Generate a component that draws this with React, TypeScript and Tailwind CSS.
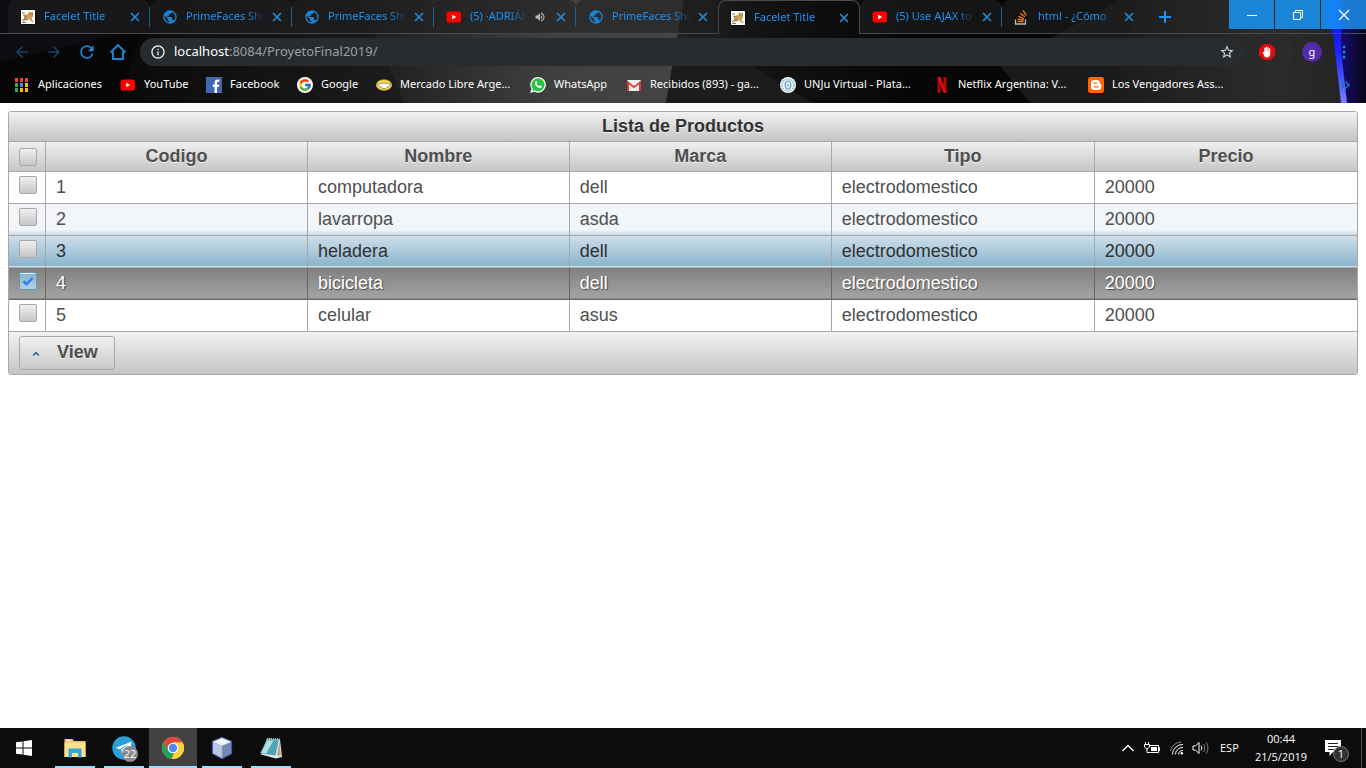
import React from "react";
import {
  MdArrowBack,
  MdArrowForward,
  MdRefresh,
  MdInfoOutline,
  MdStarBorder,
  MdVolumeUp,
  MdPublic,
} from "react-icons/md";
import { FcGoogle } from "react-icons/fc";

/* ---------- favicons ---------- */

function CatIcon() {
  return (
    <svg className="size-4" viewBox="0 0 16 16" aria-hidden="true">
      <rect x="0.5" y="0.5" width="15" height="15" fill="#000" />
      <rect x="1" y="1" width="14" height="14" fill="#fff" />
      <path d="M4 6l4-1 1-3 1.500 1.200L13 2.500v5l-1.500 2.500 2.500 3h-2L8.500 10 6 11l-3 2.500 1-4z" fill="#d1a05a" />
      <path d="M2 4h3M3 6l4 2M4 9.500l4 1.500M2 12l2-2M2 13.500h4" stroke="#7a6a4c" strokeWidth="0.900" fill="none" />
      <path d="M9.500 5h1M12 5h1" stroke="#5a3c14" strokeWidth="1" />
    </svg>
  );
}

function YouTubeIcon() {
  return (
    <svg className="size-4" viewBox="0 0 16 16" aria-hidden="true">
      <rect x="0.500" y="2.500" width="14.500" height="11" rx="2.600" fill="#f00" />
      <path d="M6.200 5.700v4.600l4-2.300z" fill="#fff" />
    </svg>
  );
}

function GlobeIcon() {
  return <MdPublic className="size-4 text-[#1b83d4]" aria-hidden="true" />;
}

function StackIcon() {
  return (
    <svg className="size-4" viewBox="0 0 16 16" aria-hidden="true" fill="none">
      <path d="M1.500 10.500v4.500h10v-4.500" stroke="#bcbbbb" strokeWidth="1.300" />
      <path d="M3.500 12.600h6M3.600 10.200l6 1M4.500 7.300l5.500 2.500M6.300 4.300l4.600 3.700M9 1.300l3.300 5" stroke="#e8741c" strokeWidth="1.400" />
    </svg>
  );
}

function AppsIcon() {
  const colors = ["#ea4335", "#ea4335", "#ea4335", "#34a853", "#4285f4", "#fbbc05", "#34a853", "#fbbc05", "#fbbc05"];
  return (
    <svg className="size-4" viewBox="0 0 16 16" aria-hidden="true">
      {colors.map((c, i) => (
        <rect key={i} x={1 + (i % 3) * 5} y={1 + Math.floor(i / 3) * 5} width="3" height="4" fill={c} />
      ))}
    </svg>
  );
}

function FacebookIcon() {
  return (
    <svg className="size-4" viewBox="0 0 16 16" aria-hidden="true">
      <rect width="16" height="16" fill="#4267b2" />
      <path d="M8.600 16V9.900H6.700V7.400h1.900V5.700c0-2 1.200-3.100 3-3.100.9 0 1.600.1 1.800.1v2.100h-1.200c-1 0-1.200.5-1.200 1.200v1.400h2.300l-.3 2.500h-2V16z" fill="#fff" />
    </svg>
  );
}

function GoogleIcon() {
  return (
    <span className="flex size-4 items-center justify-center rounded-full bg-white">
      <FcGoogle className="size-3.5" aria-hidden="true" />
    </span>
  );
}

function MercadoIcon() {
  return (
    <svg className="size-4" viewBox="0 0 16 16" aria-hidden="true">
      <ellipse cx="8" cy="8" rx="7.800" ry="5.300" fill="#f6e04a" stroke="#c9b23c" strokeWidth="0.600" />
      <path d="M1.200 6.800c2 .6 3-.8 4.800-.6 1.300.1 2.700.1 4 0 1.800-.2 2.800 1.200 4.800.6L13 9.500 9.500 11.500H7L3.500 9.500z" fill="#fff" stroke="#716a52" strokeWidth="0.700" />
    </svg>
  );
}

function WhatsAppIcon() {
  return (
    <svg className="size-4" viewBox="0 0 16 16" aria-hidden="true">
      <path d="M8.100 0a7.800 7.800 0 1 1-3.700 14.700L.2 15.900l1.200-4.100A7.800 7.800 0 0 1 8.100 0z" fill="#fff" />
      <path d="M8.100 1.300a6.500 6.500 0 1 1-3.500 12l-2.500.7.700-2.400A6.500 6.500 0 0 1 8.100 1.300z" fill="#25c440" />
      <path d="M5.600 4.200c.4-.4.9-.2 1 .1l.6 1.400c.1.400-.6 1-.5 1.200.5 1 1.300 1.700 2.400 2.200.3.1.8-.9 1.100-.8l1.500.7c.4.300.1 1.200-.3 1.500-1 .9-2.500.5-3.800-.3-1.200-.8-2.200-1.900-2.600-3.200-.3-1.100 0-2.200.6-2.800z" fill="#fff" />
    </svg>
  );
}

function GmailIcon() {
  return (
    <svg className="size-4" viewBox="0 0 16 16" aria-hidden="true">
      <rect x="1" y="3" width="14" height="11" rx="0.800" fill="#eee" />
      <path d="M1 14V3.500L8 9l7-5.500V14h-2V7.300l-5 4-5-4V14z" fill="#d93b30" />
    </svg>
  );
}

function UnjuIcon() {
  return (
    <svg className="size-4" viewBox="0 0 16 16" aria-hidden="true">
      <circle cx="8" cy="8" r="8" fill="#f4f8fa" />
      <circle cx="8" cy="8" r="6" fill="none" stroke="#8fbcd2" strokeWidth="1.300" strokeDasharray="2 0.700" />
      <ellipse cx="8" cy="8" rx="2.800" ry="4" fill="#e4f0f5" stroke="#5f9dba" strokeWidth="1.200" />
      <path d="M8 7v3" stroke="#4f8fae" />
    </svg>
  );
}

function NetflixIcon() {
  return (
    <svg className="size-4" viewBox="0 0 16 16" aria-hidden="true">
      <path d="M3.500 0h3v16l-3-.3zM9.500 0h3v15.700l-3 .3z" fill="#b00710" />
      <path d="M3.500 0h3.100l5.900 16-3-.3z" fill="#e50914" />
    </svg>
  );
}

function BloggerIcon() {
  return (
    <svg className="size-4" viewBox="0 0 16 16" aria-hidden="true">
      <rect width="16" height="16" rx="2.500" fill="#f60" />
      <path d="M6 3h2.800a3 3 0 0 1 3 3v.3c0 .5.3.7.8.7s.7.3.7.7V10a3 3 0 0 1-3 3H6a3 3 0 0 1-3-3V6a3 3 0 0 1 3-3z" fill="#fff" />
      <path d="M6 6.200h2.500M6 9.800h4.200" stroke="#f60" strokeWidth="1.300" strokeLinecap="round" />
    </svg>
  );
}

function CloseIcon() {
  return (
    <svg className="size-2.5" viewBox="0 0 10 10" aria-hidden="true">
      <path d="M1 1l8 8M9 1l-8 8" stroke="#1e8ee0" strokeWidth="1.600" />
    </svg>
  );
}

/* ---------- browser chrome ---------- */

type Tab = { title: string; icon: React.ReactNode; active?: boolean; audio?: boolean };

const tabs: Tab[] = [
  { title: "Facelet Title", icon: <CatIcon /> },
  { title: "PrimeFaces Sho", icon: <GlobeIcon /> },
  { title: "PrimeFaces Sho", icon: <GlobeIcon /> },
  { title: "(5) ·ADRIÁN", icon: <YouTubeIcon />, audio: true },
  { title: "PrimeFaces Sho", icon: <GlobeIcon /> },
  { title: "Facelet Title", icon: <CatIcon />, active: true },
  { title: "(5) Use AJAX to", icon: <YouTubeIcon /> },
  { title: "html - ¿Cómo", icon: <StackIcon /> },
];

function BrowserTab({ tab, divider }: { tab: Tab; divider: boolean }) {
  return (
    <div
      className={
        tab.active
          ? "flex h-full w-[142px] items-center rounded-t-lg border-x border-t border-[#4a4a4c] pl-[11px]"
          : "flex h-full w-[142px] items-center rounded-t-lg border-b border-[#4a4a4c] bg-[#1f1f21]/60 pl-3"
      }
    >
      {tab.icon}
      <span
        className={
          tab.audio
            ? "ml-2 w-[58px] overflow-hidden whitespace-nowrap [mask-image:linear-gradient(to_right,black_65%,transparent)]"
            : "ml-2 w-20 overflow-hidden whitespace-nowrap [mask-image:linear-gradient(to_right,black_75%,transparent)]"
        }
      >
        {tab.title}
      </span>
      {tab.audio && <MdVolumeUp className="ml-1.5 size-3 text-[#b8bcc0]" aria-label="Audio" />}
      <button type="button" aria-label="Close tab" className="ml-auto flex size-4 items-center justify-center">
        <CloseIcon />
      </button>
      <span className={divider ? "ml-1.5 h-5 w-px bg-[#17639d]" : "ml-1.5 h-5 w-px"} />
    </div>
  );
}

function ThemeBackdrop() {
  return (
    <svg className="absolute inset-0 h-full w-full" viewBox="0 0 1366 103" preserveAspectRatio="none" aria-hidden="true">
      <defs>
        <linearGradient id="mid" x1="0" x2="1">
          <stop offset="0" stopColor="#1c1c1c" />
          <stop offset="0.600" stopColor="#404040" />
          <stop offset="1" stopColor="#444" />
        </linearGradient>
        <linearGradient id="low" x1="0" x2="1">
          <stop offset="0" stopColor="#0a0a0b" />
          <stop offset="1" stopColor="#1c1c1d" />
        </linearGradient>
        <linearGradient id="dark" x1="0" x2="1">
          <stop offset="0" stopColor="#232323" />
          <stop offset="0.400" stopColor="#121212" />
          <stop offset="1" stopColor="#060606" />
        </linearGradient>
        <linearGradient id="right" x1="0" x2="1">
          <stop offset="0" stopColor="#171717" />
          <stop offset="0.700" stopColor="#2b2b2b" />
          <stop offset="1" stopColor="#222224" />
        </linearGradient>
        <linearGradient id="beam" x1="0" y1="0" x2="0" y2="1">
          <stop offset="0" stopColor="#0a14f0" />
          <stop offset="0.500" stopColor="#1a22ff" />
          <stop offset="1" stopColor="#7a80ff" />
        </linearGradient>
        <linearGradient id="glow" x1="0" x2="1">
          <stop offset="0" stopColor="#160c86" />
          <stop offset="1" stopColor="#0a0716" />
        </linearGradient>
      </defs>
      <rect width="1366" height="103" fill="#060606" />
      <path d="M0 62L190 18 260 0H0z" fill="#0e0c10" />
      <path d="M150 0h210l44 103H120z" fill="url(#low)" />
      <path d="M360 0h324L666 103H404z" fill="url(#mid)" />
      <path d="M684 0h236L900 103H666z" fill="url(#dark)" />
      <path d="M752 66l60 37H666l7-37z" fill="#1c1c1d" />
      <path d="M1120 0h246v103h-310z" fill="url(#right)" />
      <path d="M1000 66L1120 0h20l-30 103h-80z" fill="#1a1a1b" />
      <path d="M1334 0h32v103h-22z" fill="url(#glow)" />
      <path d="M1329 0h13l-1 50 6 53h-6z" fill="url(#beam)" />
    </svg>
  );
}

const bookmarks = [
  { label: "Aplicaciones", icon: <AppsIcon />, width: "w-[106px]" },
  { label: "YouTube", icon: <YouTubeIcon />, width: "w-[86px]" },
  { label: "Facebook", icon: <FacebookIcon />, width: "w-[91px]" },
  { label: "Google", icon: <GoogleIcon />, width: "w-[79px]" },
  { label: "Mercado Libre Arge...", icon: <MercadoIcon />, width: "w-[154px]" },
  { label: "WhatsApp", icon: <WhatsAppIcon />, width: "w-24" },
  { label: "Recibidos (893) - ga...", icon: <GmailIcon />, width: "w-[154px]" },
  { label: "UNJu Virtual - Plata...", icon: <UnjuIcon />, width: "w-[154px]" },
  { label: "Netflix Argentina: V...", icon: <NetflixIcon />, width: "w-[154px]" },
  { label: "Los Vengadores Ass...", icon: <BloggerIcon />, width: "w-[154px]" },
];

function BrowserHeader() {
  return (
    <header className="relative flex h-[103px] shrink-0 flex-col overflow-hidden font-['Noto_Sans','Open_Sans',sans-serif] text-[11px] text-white">
      <ThemeBackdrop />
      <div className="relative flex h-[34px] items-stretch">
        <div className="w-2 border-b border-[#4a4a4c]" />
        <div className="flex text-[#1a93fa]">
          {tabs.map((tab, i) => (
            <BrowserTab key={i} tab={tab} divider={i < 4 || i === 6} />
          ))}
        </div>
        <div className="flex flex-1 justify-between border-b border-[#4a4a4c]">
          <button type="button" aria-label="New tab" className="ml-[13px] flex h-[33px] w-4 items-center justify-center">
            <svg className="size-3" viewBox="0 0 12 12" aria-hidden="true">
              <path d="M6 0v12M0 6h12" stroke="#1a93fa" strokeWidth="2" />
            </svg>
          </button>
          <div className="flex h-[29px] gap-px">
            <button type="button" aria-label="Minimize" className="flex w-[45px] items-center justify-center bg-[#1a84d6]">
              <svg className="size-3" viewBox="0 0 12 12" aria-hidden="true">
                <path d="M1 6.500h10" stroke="#fff" />
              </svg>
            </button>
            <button type="button" aria-label="Restore" className="flex w-[45px] items-center justify-center bg-[#1a84d6]">
              <svg className="size-3" viewBox="0 0 12 12" fill="none" stroke="#fff" aria-hidden="true">
                <path d="M1.500 3.500h7v7h-7zM3.500 3.500v-2h7v7h-2" />
              </svg>
            </button>
            <button type="button" aria-label="Close" className="flex w-[45px] items-center justify-center bg-[#1a84d6] bg-linear-to-r from-[#1a84d6] via-[#1580ff] via-30% to-[#1a7ad0] to-60%">
              <svg className="size-3" viewBox="0 0 12 12" aria-hidden="true">
                <path d="M1 1l10 10M11 1L1 11" stroke="#fff" strokeWidth="1.200" />
              </svg>
            </button>
          </div>
        </div>
      </div>

      <div className="relative flex h-9 items-center pl-[13px] text-[#1b86d6]">
        <button type="button" aria-label="Back" className="w-8 text-[#13456c]">
          <MdArrowBack className="size-[18px]" />
        </button>
        <button type="button" aria-label="Forward" className="w-8 text-[#13456c]">
          <MdArrowForward className="size-[18px]" />
        </button>
        <button type="button" aria-label="Reload" className="w-8">
          <MdRefresh className="size-5" />
        </button>
        <button type="button" aria-label="Home" className="w-[31px]">
          <svg className="size-[18px]" viewBox="0 0 18 18" fill="none" stroke="currentColor" strokeWidth="1.900" aria-hidden="true">
            <path d="M1.500 9.500L9 2l7.500 7.500M4 8.500V16h10V8.500" />
          </svg>
        </button>
        <div className="flex h-7 flex-1 items-center rounded-full bg-[#282c2f] pr-2.5 pl-2.5">
          <MdInfoOutline className="size-4 text-[#e8eaed]" aria-hidden="true" />
          <div className="ml-2 flex-1 text-[13px] text-[#9aa0a6]" role="textbox" aria-label="Address" tabIndex={0}>
            <span className="text-white">localhost</span>:8084/ProyetoFinal2019/
          </div>
          <button type="button" aria-label="Bookmark this page">
            <MdStarBorder className="size-4 text-[#d5d8db]" />
          </button>
        </div>
        <div className="flex w-[121px] items-center pl-3.5">
          <svg className="size-4" viewBox="0 0 16 16" aria-hidden="true">
            <path d="M4.700 0h6.600L16 4.700v6.600L11.300 16H4.700L0 11.300V4.700z" fill="#e30b0b" />
            <path d="M3.500 8.200c.6-.7 1.300-.2 1.700.6V4.200c0-.9 1.300-.9 1.300 0V7h.3V3.200c0-.9 1.300-.9 1.300 0V7h.3V3.700c0-.9 1.300-.9 1.300 0V7.500h.3V5c0-.9 1.300-.9 1.300 0v5c0 2.300-1.300 3.500-3.300 3.500S5.300 12 4.800 11z" fill="#fff" />
          </svg>
          <span className="ml-3.5 h-4 w-px bg-[#173a56]" />
          <span className="ml-3 flex size-5 items-center justify-center rounded-full bg-[#512da8] text-[11px] text-white">g</span>
          <button type="button" aria-label="Menu" className="ml-[13px]">
            <svg className="size-[18px]" viewBox="0 0 18 18" fill="#1b86d6" aria-hidden="true">
              <circle cx="9" cy="4" r="1.500" />
              <circle cx="9" cy="9" r="1.500" />
              <circle cx="9" cy="14" r="1.500" />
            </svg>
          </button>
        </div>
      </div>

      <nav className="relative flex h-[29px] items-center pl-3.5">
        {bookmarks.map((b) => (
          <a key={b.label} href="#" className={`flex items-center gap-2 whitespace-nowrap ${b.width}`}>
            <span className="shrink-0">{b.icon}</span>
            {b.label}
          </a>
        ))}
        <svg className="mr-4 ml-auto size-2.5" viewBox="0 0 10 10" fill="none" stroke="#1b72c4" strokeWidth="1.600" aria-hidden="true">
          <path d="M1 1.500L4.500 5 1 8.500M5.500 1.500L9 5 5.500 8.500" />
        </svg>
      </nav>
    </header>
  );
}

/* ---------- product table ---------- */

type Product = { codigo: number; nombre: string; marca: string; tipo: string; precio: number };

const products: Product[] = [
  { codigo: 1, nombre: "computadora", marca: "dell", tipo: "electrodomestico", precio: 20000 },
  { codigo: 2, nombre: "lavarropa", marca: "asda", tipo: "electrodomestico", precio: 20000 },
  { codigo: 3, nombre: "heladera", marca: "dell", tipo: "electrodomestico", precio: 20000 },
  { codigo: 4, nombre: "bicicleta", marca: "dell", tipo: "electrodomestico", precio: 20000 },
  { codigo: 5, nombre: "celular", marca: "asus", tipo: "electrodomestico", precio: 20000 },
];

const rowStyles: Record<string, string> = {
  plain: "bg-white text-[#4f4f4f]",
  even: "bg-[#f2f5f9] bg-linear-to-t from-[#bdd3e4] to-transparent to-[6px] text-[#4f4f4f]",
  hover: "bg-linear-to-b from-[#cfdfea] to-[#85b2cb] text-[#313131]",
  selected: "bg-linear-to-b from-[#808080] to-[#a6a6a6] text-white [text-shadow:1px_1px_1px_#4a4a4a]",
};

const cellStyles: Record<string, string> = {
  plain: "border-[#a8a8a8]",
  even: "border-[#a8a8a8]",
  hover: "border-[#a8a8a8] shadow-[inset_0_-1px_0_#d3e3ed]",
  selected: "border-[#666666] shadow-[inset_0_-1px_0_#8a8a8a]",
};

const rowKinds = ["plain", "even", "hover", "selected", "plain"];

function CheckBox({ label, checked }: { label: string; checked?: boolean }) {
  return (
    <label className="relative block size-[18px]">
      <input
        type="checkbox"
        aria-label={label}
        defaultChecked={checked}
        className="peer block size-[18px] appearance-none rounded-[2px] border border-[#a8a8a8] bg-linear-to-b from-[#f0f0f0] to-[#c6c6c6] checked:border-[#6a9ab5] checked:from-[#85b2cb] checked:to-[#b5d2e1] checked:shadow-[inset_0_1px_0_#dfeef6]"
      />
      <svg className="absolute inset-0 hidden size-[18px] peer-checked:block" viewBox="0 0 18 18" fill="none" aria-hidden="true">
        <path d="M4.500 9.200l3 3 6-6.200" stroke="#2a7fff" strokeWidth="2.400" />
      </svg>
    </label>
  );
}

function ProductTable() {
  return (
    <section className="overflow-hidden rounded-[3px] border border-[#a8a8a8] font-['Liberation_Sans',Arial,sans-serif] text-[18px] leading-[22px]">
      <h1 className="h-[29px] bg-linear-to-b from-[#f2f2f2] to-[#c5c5c5] pt-[3px] text-center font-bold text-[#333] [text-shadow:0_1px_0_rgba(255,255,255,0.700)]">
        Lista de Productos
      </h1>
      <table className="-mx-px w-[calc(100%+2px)] table-fixed border-separate border-spacing-0">
        <colgroup>
          <col className="w-[38px]" />
          <col className="w-[19.4%]" />
          <col className="w-[19.4%]" />
          <col className="w-[19.4%]" />
          <col />
          <col />
        </colgroup>
        <thead>
          <tr className="h-[31px] bg-linear-to-b from-[#f2f2f2] to-[#c5c5c5] text-[#4f4f4f] [text-shadow:0_1px_0_rgba(255,255,255,0.700)]">
            <th className="border border-[#a8a8a8] py-0 pr-0 pl-2.5">
              <CheckBox label="Seleccionar todos" />
            </th>
            {["Codigo", "Nombre", "Marca", "Tipo", "Precio"].map((h) => (
              <th key={h} className="border-y border-r border-[#a8a8a8] px-0 pt-0 pb-0.5 font-bold">
                {h}
              </th>
            ))}
          </tr>
        </thead>
        <tbody>
          {products.map((p, i) => {
            const kind = rowKinds[i];
            const cell = cellStyles[kind];
            return (
              <tr key={p.codigo} className={`h-8 ${rowStyles[kind]}`}>
                <td className={`border-x border-b pt-1 pr-0 pb-0 pl-2.5 align-top ${cell}`}>
                  <CheckBox label={`Seleccionar ${p.nombre}`} checked={kind === "selected"} />
                </td>
                {[p.codigo, p.nombre, p.marca, p.tipo, p.precio].map((value, j) => (
                  <td key={j} className={`border-r border-b px-2.5 pt-0 pb-0.5 ${cell}`}>
                    {value}
                  </td>
                ))}
              </tr>
            );
          })}
        </tbody>
      </table>
      <div className="h-[42px] bg-linear-to-b from-[#f2f2f2] to-[#c5c5c5] pt-1 pl-2.5">
        <button
          type="button"
          className="flex h-[34px] w-24 items-center rounded-[3px] border border-[#a8a8a8] bg-linear-to-b from-[#f2f2f2] to-[#c9c9c9] pb-0.5 pl-[11px] font-bold text-[#4f4f4f] [text-shadow:0_1px_0_rgba(255,255,255,0.700)]"
        >
          <svg className="mt-1 size-2.5" viewBox="0 0 10 10" fill="none" aria-hidden="true">
            <path d="M2 6.500L5 3.700l3 2.800" stroke="#38667f" strokeWidth="1.600" />
          </svg>
          <span className="ml-4">View</span>
        </button>
      </div>
    </section>
  );
}

/* ---------- taskbar ---------- */

function FolderIcon() {
  return (
    <svg className="size-6" viewBox="0 0 24 24" aria-hidden="true">
      <path d="M1.500 3h8l1.500 2H22.500v16h-21z" fill="#f3c64b" />
      <path d="M1.500 6.500h21V21h-21z" fill="#fde08a" />
      <path d="M3.500 4.500h4" stroke="#fff" />
      <path d="M5.500 21.500v-9h13v9h-3.500v-4.500h-6v4.500z" fill="#37a5dc" />
    </svg>
  );
}

function TelegramIcon() {
  return (
    <span className="relative block size-6">
      <svg className="size-6" viewBox="0 0 24 24" aria-hidden="true">
        <circle cx="12" cy="12" r="11.700" fill="#2ba0da" />
        <path d="M4 11.800L18.500 6c.8-.2 1 .3.9.9L17 18.200c-.2.9-.8 1-1.500.6l-3.500-2.700-2 1.800-.7-4.100 7.500-6-9.300 5.500z" fill="#fff" />
      </svg>
      <span className="absolute top-2.5 left-2.5 flex size-4 items-center justify-center rounded-full bg-[#8a8a8a] text-[11px] text-white">
        22
      </span>
    </span>
  );
}

function ChromeIcon() {
  return (
    <svg className="size-6" viewBox="0 0 24 24" aria-hidden="true">
      <circle cx="12" cy="12" r="11" fill="#fdd043" />
      <path d="M12 1a11 11 0 0 1 9.600 5.600H12L7.300 14.700 2.500 6.500A11 11 0 0 1 12 1z" fill="#e2453a" />
      <path d="M2.500 6.500l4.800 8.200A5.300 5.300 0 0 0 12 17.300h1L10.500 23A11 11 0 0 1 2.500 6.500z" fill="#1da15b" />
      <path d="M16.700 14.700L11.500 23H12A11 11 0 0 0 21.600 6.600H12z" fill="#fdd043" />
      <circle cx="12" cy="12" r="5.300" fill="#fff" />
      <circle cx="12" cy="12" r="4.200" fill="#4a8af4" />
    </svg>
  );
}

function CubeIcon() {
  return (
    <svg className="size-6" viewBox="0 0 24 24" aria-hidden="true">
      <path d="M12 1.500l9.500 4v12L12 22.500l-9.500-5v-12z" fill="#9fb4d4" stroke="#4a55a8" strokeWidth="1.200" />
      <path d="M12 2l9 3.700-9 3.800-9-3.800z" fill="#eef6f4" />
      <path d="M3 6.200l8.800 3.700v12L3 17.300z" fill="#b4c8e2" />
      <path d="M21 6.200l-8.800 3.700v12l8.800-4.600z" fill="#7188b4" />
    </svg>
  );
}

function NotepadIcon() {
  return (
    <svg className="size-6" viewBox="0 0 24 24" aria-hidden="true">
      <path d="M8 2.500l13 1 2 17.500-6 1.500L2 18.500z" fill="#e9ebe6" />
      <path d="M8 3h12l-3.500 16.500L1 17.500z" fill="#4fa5b5" />
      <path d="M8.500 4.500h6L7 17.800l-5-.8z" fill="#b4dde2" />
      <path d="M8 3h12.500" stroke="#d9d9d9" strokeWidth="1.500" strokeDasharray="1 1" />
      <path d="M20.500 5l1.500 15-4-.5z" fill="#b9a983" />
    </svg>
  );
}

const taskApps = [
  { name: "Explorador", icon: <FolderIcon />, active: false },
  { name: "Telegram", icon: <TelegramIcon />, active: false },
  { name: "Chrome", icon: <ChromeIcon />, active: true },
  { name: "VirtualBox", icon: <CubeIcon />, active: false },
  { name: "Notepad", icon: <NotepadIcon />, active: false },
];

function Taskbar() {
  return (
    <footer className="flex h-10 shrink-0 bg-[#0c0c0c] font-['Open_Sans',sans-serif] text-[11px] leading-[18px] text-white">
      <button type="button" aria-label="Inicio" className="flex w-12 items-center justify-center">
        <svg className="size-4" viewBox="0 0 16 16" fill="#fff" aria-hidden="true">
          <path d="M0 2.300L6.500 1.400V7.500H0zM7.500 1.300L16 0v7.500H7.500zM0 8.500h6.500v6.100L0 13.700zM7.500 8.500H16V16l-8.500-1.200z" />
        </svg>
      </button>
      <div className="ml-[3px] flex gap-px">
        {taskApps.map((app) => (
          <button
            key={app.name}
            type="button"
            aria-label={app.name}
            className={app.active ? "flex w-12 flex-col items-center bg-[#424242]" : "flex w-12 flex-col items-center"}
          >
            <span className="flex flex-1 items-center pt-0.5">{app.icon}</span>
            <span className={app.active ? "h-0.5 w-full bg-[#9bdcf8]" : "h-0.5 w-10 bg-[#9bdcf8]"} />
          </button>
        ))}
      </div>
      <div className="ml-auto flex items-center">
        <svg className="h-4 w-3" viewBox="0 0 12 16" fill="none" aria-hidden="true">
          <path d="M.5 11L6 5.500 11.500 11" stroke="#fff" strokeWidth="1.300" />
        </svg>
        <svg className="ml-2.5 h-4 w-4" viewBox="0 0 16 16" fill="none" stroke="#fff" aria-hidden="true">
          <path d="M5.500 5.500h9v7h-9M14.500 7.500h1v3h-1M.5 4.500h5v2.500l-1.500 1.500H2L.5 7zM1.500 2v2.500M4.500 2v2.500M3 8.500v4h2.500" />
          <path d="M7 7h6v4H7z" fill="#fff" stroke="none" />
        </svg>
        <svg className="ml-2.5 size-4" viewBox="0 0 16 16" fill="none" stroke="#fff" aria-hidden="true">
          <path d="M2.500 14.500A10 10 0 0 1 13 4.500M5.500 14.500A7 7 0 0 1 13 7.500M8.500 14.500A4.500 4.500 0 0 1 13 10.500" />
          <path d="M.5 11A11 11 0 0 1 11 2" stroke="#888" />
          <circle cx="11.800" cy="13.300" r="1.300" fill="#fff" stroke="none" />
        </svg>
        <svg className="ml-1.5 h-4 w-[18px]" viewBox="0 0 18 16" fill="none" stroke="#fff" aria-hidden="true">
          <path d="M1 6h2.500L7 2.500v11L3.500 10H1zM9 5.500c1 1.300 1 3.700 0 5" />
          <path d="M11.500 4c1.700 2.300 1.700 5.700 0 8M14 2.500c2.500 3.300 2.500 7.700 0 11" stroke="#888" />
        </svg>
        <span className="ml-2.5 w-5">ESP</span>
        <div className="ml-3 w-[58px] text-center">
          <div>00:44</div>
          <div>21/5/2019</div>
        </div>
        <button type="button" aria-label="Notificaciones" className="relative ml-[15px] h-6 w-7">
          <svg className="h-[18px] w-4" viewBox="0 0 16 18" aria-hidden="true">
            <path d="M0 1h16v12H8l-3.500 4v-4H0z" fill="#fff" />
            <path d="M3 4.500h10M3 7.500h10M3 10.500h6" stroke="#222" />
          </svg>
          <span className="absolute top-2.5 left-2 flex size-4 items-center justify-center rounded-full border border-[#777] bg-[#333] text-[11px]">
            1
          </span>
        </button>
        <span className="ml-2 h-full w-px bg-[#4d4d4d]" />
        <span className="w-1" />
      </div>
    </footer>
  );
}

export default function App() {
  return (
    <div className="flex min-h-screen flex-col bg-white">
      <BrowserHeader />
      <main className="flex-1 p-2">
        <ProductTable />
      </main>
      <Taskbar />
    </div>
  );
}
